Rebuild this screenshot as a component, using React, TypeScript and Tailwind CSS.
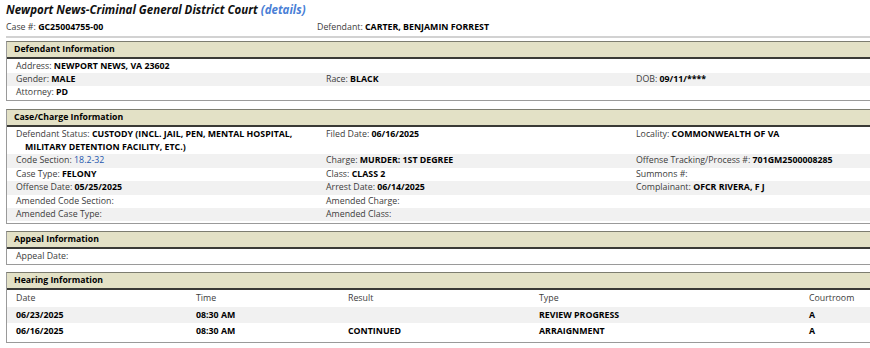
const font = { fontFamily: '"Open Sans", "Noto Sans", Arial, sans-serif' };

type Field = { label: string; value?: string; link?: boolean };

function Cell({ f }: { f?: Field }) {
  if (!f) return <div />;
  return (
    <div className="pl-[9px] -indent-[9px] whitespace-nowrap">
      <span className="text-[#3c3c3c]">{f.label}: </span>
      {f.value && (
        <span className={f.link ? "text-[#2456ad]" : "font-bold text-black"}>
          {f.value}
        </span>
      )}
    </div>
  );
}

function Row({
  cells,
  shade,
  tall,
}: {
  cells: (Field | undefined)[];
  shade?: boolean;
  tall?: boolean;
}) {
  return (
    <div
      className={`grid grid-cols-[310px_310px_1fr] px-[9px] items-center ${
        tall ? "h-[13.4px] leading-[13.4px]" : "h-[12.8px] leading-[12.8px]"
      } ${shade ? "bg-[#f1f1f1]" : "bg-white"}`}
    >
      {cells.map((c, i) => (
        <Cell key={i} f={c} />
      ))}
    </div>
  );
}

function Section({
  title,
  children,
  gap,
  pad = true,
}: {
  title: string;
  children: React.ReactNode;
  gap: string;
  pad?: boolean;
}) {
  return (
    <section
      className={`${gap} border border-[#9a9a9a] border-t-[#7d7d70] ${pad ? "pb-[2px]" : ""}`}
    >
      <div className="h-[17px] bg-[#e3e1c6] border-b-[2px] border-[#3a3a36] px-[7px] font-bold text-[8.7px] leading-[15px] text-black mb-[1px]">
        {title}
      </div>
      <div>{children}</div>
    </section>
  );
}

export default function App() {
  return (
    <div className="w-[870px] h-[348px] overflow-hidden bg-white" style={font}>
      <div className="w-[935px] pl-[6px] text-[8.8px] text-[#222]">
        <h1 className="pt-[1px] text-[11.5px] leading-[18px] font-bold italic text-[#111]">
          Newport News-Criminal General District Court{" "}
          <span className="text-[#4a7fd6]">(details)</span>
        </h1>
        <div className="mt-[1px] grid grid-cols-[311px_1fr] leading-[14px]">
          <div>
            <span className="text-[#3c3c3c]">Case #: </span>
            <span className="font-bold text-black">GC25004755-00</span>
          </div>
          <div>
            <span className="text-[#3c3c3c]">Defendant: </span>
            <span className="font-bold text-black">CARTER, BENJAMIN FORREST</span>
          </div>
        </div>
        <div className="mt-[2px] h-[2px] bg-[#d2d2d2]" />

        <Section title="Defendant Information" gap="mt-[3px]">
          <Row cells={[{ label: "Address", value: "NEWPORT NEWS, VA 23602" }]} />
          <Row
            shade
            cells={[
              { label: "Gender", value: "MALE" },
              { label: "Race", value: "BLACK" },
              { label: "DOB", value: "09/11/****" },
            ]}
          />
          <Row cells={[{ label: "Attorney", value: "PD" }]} />
        </Section>

        <Section title="Case/Charge Information" gap="mt-[8px]">
          <div className="grid grid-cols-[310px_310px_1fr] px-[9px] leading-[13px] bg-white">
            <div className="pl-[9px] -indent-[9px]">
              <span className="text-[#3c3c3c]">Defendant Status: </span>
              <span className="font-bold text-black">
                CUSTODY (INCL. JAIL, PEN, MENTAL HOSPITAL,
                <br />
                MILITARY DETENTION FACILITY, ETC.)
              </span>
            </div>
            <Cell f={{ label: "Filed Date", value: "06/16/2025" }} />
            <Cell f={{ label: "Locality", value: "COMMONWEALTH OF VA" }} />
          </div>
          <Row
            tall
            shade
            cells={[
              { label: "Code Section", value: "18.2-32", link: true },
              { label: "Charge", value: "MURDER: 1ST DEGREE" },
              { label: "Offense Tracking/Process #", value: "701GM2500008285" },
            ]}
          />
          <Row
            tall
            cells={[
              { label: "Case Type", value: "FELONY" },
              { label: "Class", value: "CLASS 2" },
              { label: "Summons #" },
            ]}
          />
          <Row
            tall
            shade
            cells={[
              { label: "Offense Date", value: "05/25/2025" },
              { label: "Arrest Date", value: "06/14/2025" },
              { label: "Complainant", value: "OFCR RIVERA, F J" },
            ]}
          />
          <Row tall cells={[{ label: "Amended Code Section" }, { label: "Amended Charge" }]} />
          <Row tall shade cells={[{ label: "Amended Case Type" }, { label: "Amended Class" }]} />
        </Section>

        <Section title="Appeal Information" gap="mt-[7px]" pad={false}>
          <Row tall cells={[{ label: "Appeal Date" }]} />
        </Section>

        <Section title="Hearing Information" gap="mt-[7px]">
          <table className="w-full border-collapse">
            <tbody>
              {[
                { cells: ["Date", "Time", "Result", "Type", "Courtroom"], head: true },
                { cells: ["06/23/2025", "08:30 AM", "", "REVIEW PROGRESS", "A"], shade: true },
                { cells: ["06/16/2025", "08:30 AM", "CONTINUED", "ARRAIGNMENT", "A"] },
              ].map((r, i) => (
                <tr key={i} className={r.shade ? "bg-[#f1f1f1]" : "bg-white"}>
                  {r.cells.map((c, j) => (
                    <td
                      key={j}
                      className={`h-[16.3px] p-0 text-left align-middle leading-[13px] ${
                        j === 0 ? "pl-[9px] w-[189px]" : ""
                      } ${j === 1 ? "w-[152px]" : ""} ${j === 2 ? "w-[191px]" : ""} ${
                        j === 3 ? "w-[270px]" : ""
                      } ${r.head ? "text-[#3c3c3c]" : "font-bold text-black"}`}
                    >
                      {c}
                    </td>
                  ))}
                </tr>
              ))}
            </tbody>
          </table>
        </Section>
      </div>
    </div>
  );
}
